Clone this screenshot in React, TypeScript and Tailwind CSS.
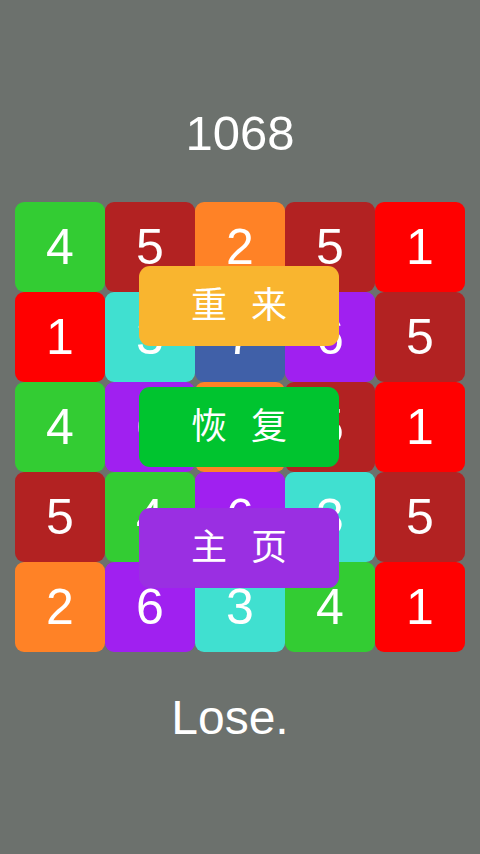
import React from 'react';

const COLORS: Record<number, string> = {
  1: 'bg-[#ff0000]',
  2: 'bg-[#ff8226]',
  3: 'bg-[#40e0d0]',
  4: 'bg-[#33cc33]',
  5: 'bg-[#b22222]',
  6: 'bg-[#a020f0]',
  7: 'bg-[#4060a8]',
};

const board: number[][] = [
  [4, 5, 2, 5, 1],
  [1, 3, 7, 6, 5],
  [4, 6, 2, 5, 1],
  [5, 4, 6, 3, 5],
  [2, 6, 3, 4, 1],
];

const buttons = [
  { label: ['重', '来'], cls: 'bg-[#f9b52f]' },
  { label: ['恢', '复'], cls: 'bg-[#00c42f]' },
  { label: ['主', '页'], cls: 'bg-[#9a2fe2]' },
];

const font = { fontFamily: '"Liberation Sans", "Noto Sans CJK SC", sans-serif' };

export default function App() {
  return (
    <div
      className="w-[480px] h-[854px] bg-[#6c716d] flex flex-col items-center text-white overflow-hidden"
      style={font}
    >
      <div className="mt-[103px] text-[49px] leading-[60px]">1068</div>

      <div className="relative mt-[39px] w-[450px] h-[450px] grid grid-cols-5 grid-rows-5">
        {board.flat().map((v, i) => (
          <div
            key={i}
            className={`${COLORS[v]} rounded-[9px] flex items-center justify-center text-[50px] leading-none`}
          >
            {v}
          </div>
        ))}

        {/* game-over menu over the board */}
        <div className="absolute left-[124px] top-[64px] flex flex-col gap-[41px]">
          {buttons.map(b => (
            <div
              key={b.label.join('')}
              className={`${b.cls} w-[200px] h-[80px] rounded-[11px] flex items-center justify-center gap-[24px] text-[36px] leading-none`}
            >
              <span>{b.label[0]}</span>
              <span>{b.label[1]}</span>
            </div>
          ))}
        </div>
      </div>

      <div className="mt-[36px] pr-[20px] text-[48px] leading-[60px]">Lose.</div>
    </div>
  );
}
